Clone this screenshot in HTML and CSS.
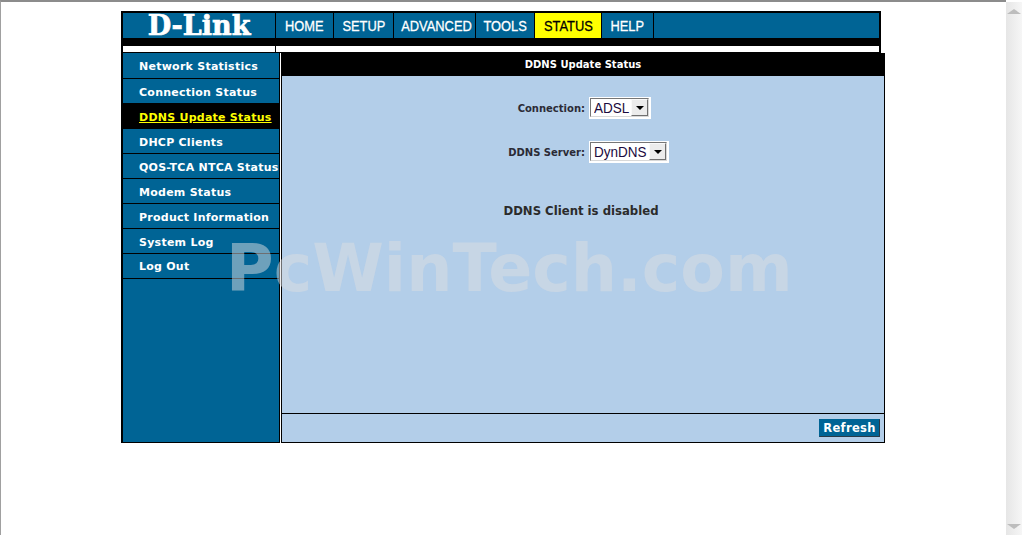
FILE: index.html
```html
<!DOCTYPE html>
<html lang="en">
<head>
<meta charset="utf-8">
<title>DDNS Update Status</title>
<link rel="stylesheet" href="styles.css">
</head>
<body>
<div class="page">
  <header class="header">
    <nav class="topbar">
      <div class="logo"><span class="logo-text">D-Link</span></div>
      <a class="tab"><span class="tab-text">HOME</span></a>
      <a class="tab"><span class="tab-text">SETUP</span></a>
      <a class="tab"><span class="tab-text">ADVANCED</span></a>
      <a class="tab"><span class="tab-text">TOOLS</span></a>
      <a class="tab tab-active"><span class="tab-text">STATUS</span></a>
      <a class="tab"><span class="tab-text">HELP</span></a>
      <div class="tab"></div>
    </nav>
    <div class="subbar"><div class="subcell"></div><div class="subcell"></div></div>
  </header>
  <div class="main">
    <aside class="sidebar">
      <a class="item item-first">Network Statistics</a>
      <a class="item">Connection Status</a>
      <a class="item item-active">DDNS Update Status</a>
      <a class="item">DHCP Clients</a>
      <a class="item">QOS-TCA NTCA Status</a>
      <a class="item">Modem Status</a>
      <a class="item">Product Information</a>
      <a class="item">System Log</a>
      <a class="item item-last">Log Out</a>
    </aside>
    <section class="content">
      <h1 class="title">DDNS Update Status</h1>
      <div class="panel">
        <div class="field field-conn">
          <span class="label">Connection:</span>
          <span class="select select-conn"><span class="select-box"><span class="select-value">ADSL</span><span class="select-btn"><span class="arrow"></span></span></span></span>
        </div>
        <div class="field field-server">
          <span class="label">DDNS Server:</span>
          <span class="select select-server"><span class="select-box"><span class="select-value">DynDNS</span><span class="select-btn"><span class="arrow"></span></span></span></span>
        </div>
        <p class="message">DDNS Client is disabled</p>
      </div>
      <div class="footer"><button class="refresh" type="button">Refresh</button></div>
    </section>
  </div>
  <div class="watermark">PcWinTech.com</div>
</div>
<div class="scrollbar"><span class="sb-up"></span><span class="sb-down"></span></div>
</body>
</html>
```
FILE: styles.css
```css
html, body { margin: 0; padding: 0; height: 535px; overflow: hidden; background: #fff; }
body { display: flex; font-family: "DejaVu Sans", Verdana, sans-serif; }
.page { position: relative; flex: 1; box-sizing: border-box; height: 535px; padding: 9px 0 0 120px; border-top: 2px solid #8c8c8c; border-left: 1px solid #a0a0a0; overflow: hidden; }
.header { width: 760px; box-sizing: border-box; border: solid #000; border-width: 2px 2px 1px; background: #000; }
.topbar { display: grid; grid-template-columns: 152px 57px 59px 81px 58px 66px 51px 1fr; column-gap: 1px; height: 25px; }
.logo { background: #006495; display: flex; align-items: center; justify-content: center; }
.logo-text { font: bold 27px/25px "DejaVu Serif", serif; color: #fff; -webkit-text-stroke: .7px #fff; }
.tab { background: #006495; color: #fff; font: 15.5px/25px "Liberation Sans", Arial, sans-serif; text-align: center; }
.tab-text { display: inline-block; transform: scaleX(.83); -webkit-text-stroke: .3px currentColor; white-space: nowrap; }
.tab-active { background: #ff0; color: #000; }
.subbar { display: grid; grid-template-columns: 152px 1fr; column-gap: 1px; margin-top: 8px; }
.subcell { height: 6px; background: #fff; }
.main { display: flex; width: 764px; }
.sidebar { width: 159px; height: 390px; box-sizing: border-box; background: #006495; border: solid #000; border-width: 0 1px 1px 2px; margin-right: 1px; }
.item { display: block; height: 24px; border-bottom: 1px solid #000; padding-left: 16px; color: #fff; font-size: 11px; letter-spacing: .25px; font-weight: bold; line-height: 27px; white-space: nowrap; overflow: hidden; }
.item-first { height: 25px; }
.item-last { line-height: 25px; }
.item-active { height: 25px; border-bottom: 0; background: #000; color: #ff0; text-decoration: underline; }
.content { width: 604px; height: 390px; box-sizing: border-box; border: solid #000; border-width: 0 1px 1px; background: #b3cee9; display: flex; flex-direction: column; }
.title { margin: 0 -1px; height: 23px; background: #000; color: #fff; font-size: 10px; font-weight: bold; line-height: 23px; text-align: center; }
.panel { flex: 1; border-bottom: 1px solid #000; display: flex; flex-direction: column; }
.field { display: grid; grid-template-columns: 303px auto; column-gap: 4px; align-items: center; justify-content: start; color: #2b2b36; font-size: 10px; font-weight: bold; height: 22px; }
.label { text-align: right; }
.field-conn { margin-top: 21px; }
.field-server { margin-top: 22px; }
.select { display: block; background: #fff; padding: 1px 2px 2px 1px; }
.select-conn { width: 59px; }
.select-server { width: 77px; }
.select-box { display: flex; justify-content: space-between; box-sizing: border-box; height: 19px; border: 1px solid #767676; border-right-color: #d8d8d8; border-bottom-color: #d8d8d8; background: #fff; }
.select-value { display: inline-block; margin-left: 3px; color: #1a0a40; font: 15px/17px "Liberation Sans", Arial, sans-serif; transform: scaleX(.9); transform-origin: left center; width: 0; white-space: nowrap; }
.select-btn { width: 17px; height: 17px; box-sizing: border-box; background: #ececec; border: 1px solid #fafafa; border-right-color: #707070; border-bottom-color: #707070; display: flex; align-items: center; justify-content: center; }
.arrow { width: 0; height: 0; border: 4px solid transparent; border-top: 4px solid #000; border-bottom: 0; }
.message { margin: 0; padding-top: 40px; width: 598px; text-align: center; color: #2b2b2b; font-size: 11.7px; font-weight: bold; line-height: 16px; }
.footer { height: 28px; display: flex; align-items: flex-start; justify-content: flex-end; padding-right: 4px; }
.refresh { margin-top: 5px; width: 61px; height: 18px; padding: 0; box-sizing: border-box; background: #006495; border: 1px solid #006495; border-right-color: #2a3a48; border-bottom-color: #2a3a48; color: #fff; font-family: "DejaVu Sans", Verdana, sans-serif; font-size: 11.5px; font-weight: bold; letter-spacing: .3px; }
.watermark { position: absolute; left: 225px; top: 232px; color: rgba(220, 222, 225, .5); font-size: 65px; font-weight: bold; line-height: 70px; white-space: nowrap; }
.scrollbar { width: 16px; height: 533px; margin-top: 2px; background: linear-gradient(90deg, #e6e6e6, #f6f6f6); display: flex; flex-direction: column; justify-content: space-between; align-items: center; padding: 7px 0 6px; box-sizing: border-box; }
.sb-up, .sb-down { width: 0; height: 0; border: 7px solid transparent; }
.sb-up { border-top: 0; border-bottom: 5px solid #bdbdbd; }
.sb-down { border-bottom: 0; border-top: 5px solid #bdbdbd; }
```
